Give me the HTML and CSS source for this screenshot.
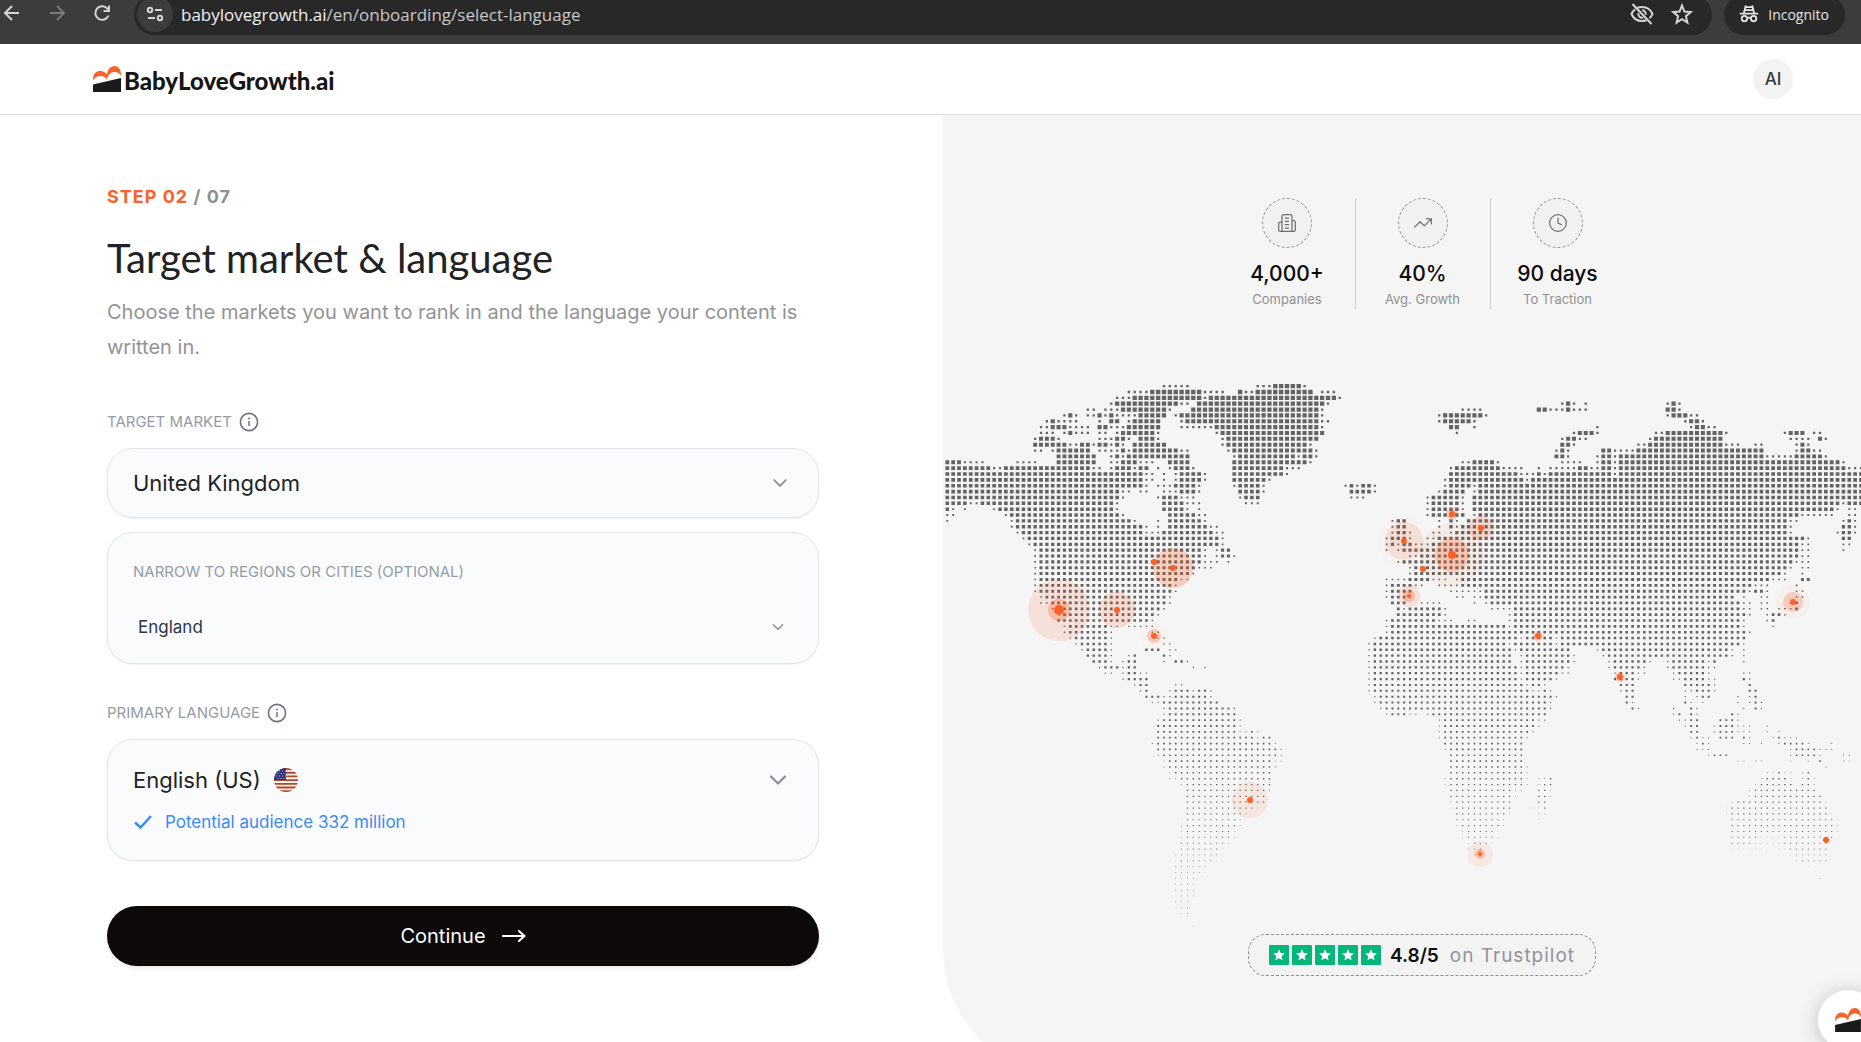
FILE: index.html
```html
<!DOCTYPE html>
<html lang="en">
<head>
<meta charset="utf-8">
<title>Select language – BabyLoveGrowth.ai</title>
<link rel="stylesheet" href="styles.css">
</head>
<body>
<svg class="defs" aria-hidden="true">
  <symbol id="chevron" viewBox="0 0 24 24"><path d="m5 8.500 7 7 7-7" fill="none" stroke="currentColor" stroke-width="2.200" stroke-linecap="round" stroke-linejoin="round"/></symbol>
  <symbol id="info" viewBox="0 0 20 20"><circle cx="10" cy="10" r="8.600" fill="none" stroke="currentColor" stroke-width="1.600"/><path d="M10 9v5" stroke="currentColor" stroke-width="1.500"/><circle cx="10" cy="6.500" r="1" fill="currentColor"/></symbol>
  <symbol id="mark" viewBox="0 0 28 26"><path d="M0 14.500C-.6 8.500 3 5 7 5c3 0 5.600 1.500 7 3.500C14.500 3.500 17.500 0 21.500 0S28.400 4 28 10c-1-2.500-3.500-4-6.500-4-3.500 0-6.500 2.500-7.500 7.500-1.500-2.500-4-3.700-7-3.500-3 .2-5.500 1.700-7 4.500Z" fill="#f9622a"/><path d="M0 18.500 28 12v14H0Z" fill="#1b1a1a"/></symbol>
  <symbol id="star" viewBox="0 0 20 20"><rect width="20" height="20" rx="1" fill="#05b67b"/><path d="m10 4.300 1.700 3.800 4.100.4-3.100 2.700.9 4.100L10 13.200l-3.600 2.100.9-4.100-3.100-2.700 4.100-.4Z" fill="#fff"/></symbol>
</svg>

<div class="browser">
  <nav class="browser-nav" aria-label="Browser">
    <button class="nav-button" type="button" aria-label="Back"><svg viewBox="0 0 18 18"><path d="M16 9H2M9 2 2 9l7 7"/></svg></button>
    <button class="nav-button nav-button-off" type="button" aria-label="Forward"><svg viewBox="0 0 18 18"><path d="M2 9h14M9 2l7 7-7 7"/></svg></button>
    <button class="nav-button" type="button" aria-label="Reload"><svg viewBox="0 0 18 18"><path d="M15.500 11.500A6.800 6.800 0 1 1 14.800 5.200L16 7M16 1.500V7h-5.500"/></svg></button>
  </nav>
  <div class="omnibox">
    <button class="site-info" type="button" aria-label="Site information"><svg viewBox="0 0 18 18"><circle cx="4" cy="5" r="2.200"/><path d="M9 5h7"/><circle cx="14" cy="13" r="2.200"/><path d="M2 13h7"/></svg></button>
    <div class="url"><span class="url-host">babylovegrowth.ai</span>/en/onboarding/select-language</div>
    <svg class="bar-icon" viewBox="0 0 24 24"><path d="M7.500 5.800A11 11 0 0 1 12 5c5 0 8.800 3 10.500 7a11 11 0 0 1-3 4.200M5.200 7.300A11 11 0 0 0 1.500 12C3.200 16 7 19 12 19c1.600 0 3-.3 4.300-.8M2.500 2l19 20M12 8.200a3.800 3.800 0 0 1 3.700 4.500M8.400 11a3.800 3.800 0 0 0 4.800 4.600"/></svg>
    <svg class="bar-icon" viewBox="0 0 24 24"><path d="m12 3.500 2.400 6 6.400.5-4.900 4.200 1.500 6.300-5.400-3.400-5.400 3.400 1.500-6.300L3.200 10l6.400-.5Z"/></svg>
  </div>
  <div class="incognito">
    <svg class="bar-icon" viewBox="0 0 24 24"><path d="M2 11.500h20M6.500 11l1.700-7.200 2 .7h3.600l2-.7 1.700 7.200M7 7.800h10"/><circle cx="7" cy="17" r="3"/><circle cx="17" cy="17" r="3"/><path d="M10 16.500q2-1 4 0"/></svg>
    <span>Incognito</span>
  </div>
</div>

<div class="page">
  <header class="header">
    <a class="logo" href="#"><svg viewBox="0 0 28 26"><use href="#mark"/></svg><span>BabyLoveGrowth.ai</span></a>
    <button class="avatar" type="button">AI</button>
  </header>

  <div class="columns">
    <main class="setup">
      <form class="form">
        <p class="step"><span class="step-now">STEP 02</span> / 07</p>
        <h1 class="title">Target market &amp; language</h1>
        <p class="lead">Choose the markets you want to rank in and the language your content is written in.</p>

        <div class="field-head"><label for="market">TARGET MARKET</label><svg class="info"><use href="#info"/></svg></div>
        <div class="card card-market">
          <select id="market" class="select select-large"><option>United Kingdom</option></select>
          <svg class="chevron chevron-medium"><use href="#chevron"/></svg>
        </div>
        <div class="card card-region">
          <label for="region">NARROW TO REGIONS OR CITIES (OPTIONAL)</label>
          <div class="row row-region">
            <select id="region" class="select"><option>England</option></select>
            <svg class="chevron chevron-small"><use href="#chevron"/></svg>
          </div>
        </div>

        <div class="field-head"><label for="language">PRIMARY LANGUAGE</label><svg class="info"><use href="#info"/></svg></div>
        <div class="card card-language">
          <div class="row">
            <select id="language" class="select select-large select-fit"><option>English (US)</option></select>
            <svg class="flag" viewBox="0 0 24 24">
              <clipPath id="round"><circle cx="12" cy="12" r="12"/></clipPath>
              <g clip-path="url(#round)"><path fill="#fbf3ee" d="M0 0h24v24H0z"/><path stroke="#b1482b" stroke-width="1.850" d="M0 1h24M0 4.700h24M0 8.400h24M0 12.100h24M0 15.800h24M0 19.500h24M0 23.200h24"/><path fill="#2f3480" d="M0 0h12v12H0z"/><path stroke="#b9bbdc" stroke-width="1" stroke-dasharray="1 2" d="M2 3h10M3.500 5.500H12M2 8h10M3.500 10.500H12"/></g>
            </svg>
            <svg class="chevron chevron-large"><use href="#chevron"/></svg>
          </div>
          <p class="audience"><svg viewBox="0 0 20 20"><path d="m2 10.500 5.500 5L18 4" fill="none" stroke="currentColor" stroke-width="2.400"/></svg>Potential audience 332 million</p>
        </div>

        <button class="continue" type="submit">Continue<svg viewBox="0 0 24 14"><path d="M1 7h21M17 2l5.500 5-5.500 5" fill="none" stroke="currentColor" stroke-width="2" stroke-linecap="round" stroke-linejoin="round"/></svg></button>
      </form>
    </main>

    <aside class="proof">
      <ul class="stats">
        <li class="stat">
          <span class="stat-icon"><svg viewBox="0 0 24 24"><path d="M6 22V4a2 2 0 0 1 2-2h8a2 2 0 0 1 2 2v18ZM6 11H4a2 2 0 0 0-2 2v7a2 2 0 0 0 2 2h2M18 9h2a2 2 0 0 1 2 2v9a2 2 0 0 1-2 2h-2M10 6h4M10 10h4M10 14h4M10 18h4"/></svg></span>
          <strong>4,000+</strong><span>Companies</span>
        </li>
        <li class="stat">
          <span class="stat-icon"><svg viewBox="0 0 24 24"><path d="m22 7-8.500 8.500-5-5L2 17M16 7h6v6"/></svg></span>
          <strong>40%</strong><span>Avg. Growth</span>
        </li>
        <li class="stat">
          <span class="stat-icon"><svg viewBox="0 0 24 24"><circle cx="12" cy="12" r="10"/><path d="M12 6v6l4 2"/></svg></span>
          <strong>90 days</strong><span>To Traction</span>
        </li>
      </ul>

      <svg class="map" viewBox="0 0 918 548" role="img" aria-label="World map of customers">
        <path id="land" fill="#636363"/>
        <g id="pins" fill="#fb6027"></g>
      </svg>

      <div class="rating">
        <span class="stars"><svg><use href="#star"/></svg><svg><use href="#star"/></svg><svg><use href="#star"/></svg><svg><use href="#star"/></svg><svg><use href="#star"/></svg></span>
        <strong>4.8/5</strong><span class="rating-source">on Trustpilot</span>
      </div>
    </aside>
  </div>
  <button class="chat" type="button" aria-label="Open chat"><svg viewBox="0 0 28 26"><use href="#mark"/></svg></button>
</div>
<script src="map.js"></script>
</body>
</html>
```
FILE: styles.css
```css
* { box-sizing: border-box; }
body {
  margin: 0;
  height: 100vh;
  display: flex;
  flex-direction: column;
  overflow: hidden;
  background: #fff;
  color: #212224;
  font-family: Inter, "Liberation Sans", sans-serif;
  font-size: 16px;
}
p, h1, ul { margin: 0; padding: 0; }
button, select { font: inherit; color: inherit; border: 0; background: none; padding: 0; }
.defs { display: none; }

/* Browser bar */
.browser {
  flex: none;
  height: 44px;
  padding: 0 16px 9px 0;
  display: flex;
  align-items: flex-end;
  background: #3c3c3c;
  color: #d4d4d4;
  font-family: "Open Sans", "Noto Sans", sans-serif;
}
.browser svg { fill: none; stroke: currentColor; stroke-width: 2; }
.browser-nav { display: flex; gap: 27px; width: 134px; padding: 0 0 13px 3px; }
.nav-button { width: 18px; height: 18px; }
.nav-button svg { display: block; }
.nav-button-off { color: #7b7b7b; }
.omnibox, .incognito {
  height: 40px;
  padding-bottom: 2px;
  display: flex;
  align-items: center;
  background: #282828;
  border-radius: 20px;
}
.omnibox { flex: 1; gap: 16px; padding-left: 3px; padding-right: 18px; }
.site-info { width: 36px; height: 36px; border-radius: 50%; background: #3c3c3c; display: grid; place-items: center; }
.site-info svg { width: 18px; height: 18px; }
.url { flex: 1; margin-left: -8px; font-size: 17px; color: #c7c7c7; }
.url-host { color: #f0f0f0; }
.bar-icon { width: 24px; height: 24px; }
.incognito { margin-left: 12px; padding-left: 14px; padding-right: 16px; gap: 8px; font-size: 14px; color: #e4e4e4; }
.incognito .bar-icon { width: 22px; height: 22px; }

/* Page */
.page { flex: 1; min-height: 0; display: flex; flex-direction: column; position: relative; overflow: hidden; }
.header {
  flex: none;
  height: 71px;
  padding: 0 68px 0 93px;
  display: flex;
  align-items: center;
  justify-content: space-between;
  border-bottom: 1px solid #dcdcdc;
}
.logo { display: flex; align-items: center; gap: 3px; padding-top: 3px; color: #171616; text-decoration: none; font-family: Lato, sans-serif; font-weight: 900; font-size: 24px; }
.logo svg { width: 28px; height: 26px; margin-bottom: 4px; }
.avatar { width: 40px; height: 40px; border-radius: 50%; background: #f3f3f4; color: #333941; font-weight: 500; font-size: 17px; }
.columns { flex: 1; display: grid; grid-template-columns: 943fr 918fr; }
.setup { padding: 68px 124px 0 107px; }
.form { display: flex; flex-direction: column; }

.step { font-weight: 700; font-size: 18px; line-height: 28px; letter-spacing: 1px; color: #8e9092; }
.step-now { color: #f9622a; }
.title { margin-top: 22px; font-family: Lato, sans-serif; font-weight: 400; font-size: 40px; line-height: 50px; }
.lead { margin-top: 12px; font-size: 20px; line-height: 35px; color: #929497; }
.field-head { display: flex; align-items: center; gap: 7px; height: 20px; margin-top: 47px; margin-bottom: 16px; color: #6b7280; }
.card + .field-head { margin-top: 39px; }
label { font-size: 15px; line-height: 20px; color: #949ba6; }
.info { width: 20px; height: 20px; }
.card {
  border: 1px solid #e2e4e7;
  border-radius: 26px;
  background: #fafbfd;
  box-shadow: 0 1px 2px #0000000d;
}
.card-market { height: 70px; padding: 0 28px 0 25px; display: flex; align-items: center; }
.card-region { height: 132px; margin-top: 14px; padding: 28px 32px 0 25px; }
.card-language { height: 122px; padding: 23px 28px 0 25px; }
.row { display: flex; align-items: center; height: 34px; }
.row-region { margin-top: 28px; padding-left: 5px; color: #2c3440; }
.select { appearance: none; flex: 1; font-size: 17px; outline: none; }
.select-large { font-size: 22px; }
.select-fit { flex: none; field-sizing: content; }
.chevron { color: #8c8e91; margin-left: auto; }
.chevron-small { width: 16px; height: 16px; }
.chevron-medium { width: 20px; height: 20px; }
.chevron-large { width: 24px; height: 24px; }
.flag { width: 24px; height: 24px; margin-left: 13px; }
.audience { display: flex; align-items: center; gap: 12px; margin-top: 13px; font-size: 17px; line-height: 24px; color: #3b8af5; }
.audience svg { width: 20px; height: 20px; }
.continue {
  height: 60px;
  margin-top: 45px;
  border-radius: 30px;
  background: #0d0909;
  color: #fff;
  font-size: 20px;
  display: flex;
  align-items: center;
  justify-content: center;
  gap: 16px;
  box-shadow: 0 2px 4px #0000001a;
}
.continue svg { width: 24px; height: 14px; }

/* Right panel */
.proof {
  min-height: calc(100% + 35px);
  border-bottom-left-radius: 128px;
  background: #f5f5f5;
  display: flex;
  flex-direction: column;
  align-items: center;
}
.stats { list-style: none; display: flex; margin: 83px 0 0 40px; }
.stat {
  width: 135px;
  height: 111px;
  display: flex;
  flex-direction: column;
  align-items: center;
  font-size: 13px;
  line-height: 18px;
  color: #8f9193;
}
.stat + .stat { border-left: 1px solid #cfcfcf; }
.stat strong { margin-top: 11px; margin-bottom: 1px; font-weight: 500; font-size: 21px; line-height: 30px; color: #0b0b0b; }
.stat-icon { width: 50px; height: 50px; border: 1px dashed #8d8d8d; border-radius: 50%; background: #f1f1f1; display: grid; place-items: center; }
.stat-icon svg { width: 20px; height: 20px; fill: none; stroke: #6f6f6f; stroke-width: 1.5px; stroke-linecap: round; stroke-linejoin: round; }
.map { width: 100%; margin-top: 73px; }
.rating {
  height: 42px;
  margin: 4px 0 0 40px;
  padding: 0 20px;
  display: flex;
  align-items: center;
  border: 1px dashed #8d8d8d;
  border-radius: 18px;
  background: #f3f3f3;
  font-size: 19px;
  color: #929497;
}
.stars { display: flex; gap: 3px; }
.stars svg { width: 20px; height: 20px; }
.rating strong { margin: 0 11px 0 9px; font-weight: 600; color: #0e0e0e; }
.rating-source { letter-spacing: 1px; }
.chat {
  position: absolute;
  right: -17px;
  bottom: -8px;
  width: 60px;
  height: 60px;
  border-radius: 50%;
  background: #fff;
  box-shadow: 0 2px 20px #00000038;
  display: grid;
  place-items: center;
}
.chat svg { width: 26px; height: 24px; }
```
FILE: map.js
```
// Dot grid of the land. One line per grid row, north to south.
// "12-20" is a run of columns, "12" one column, a leading "s" marks small coastal dots.
const rows = `
s37-41 s53-55 56-60 s61
s31-34 35-43 s44-47 50 s51-52 53-62 s64-66
s29-31 32-43 s44 45-66 s67
s28 29-39 s40-41 43-64 s65 s105 106 s107 s109 s123 124 s125
s24-25 s27-29 30-37 s38 42-63 s64 s88-91 101-102 s103-105 106 s107-109 123-124 s125
s20 21 s22 s24-25 26 s27 28 s29-32 33-37 s39 40-63 s64 s84 85-91 s92 s123 124-126 s127-128
s17 18 s19-22 s26 28-29 s31 32-36 s40 41-63 s64-65 s84 85-89 s90 s126 127-128 s129
s16-17 18-20 s21-24 26-27 s28-30 31-36 s40-45 46-63 s64 86-87 s90 s111 s127 128-129 s130-131
s16-18 s20 21 s22-24 s26-27 s29 30-35 s36 s46 47-64 s87 s107 108-110 s111 s121-122 123-132 s133 s143 144-146 s148-149
s15 16-18 s19 s26-28 29-30 s31 33-35 s36 s47 48-63 s105 106-107 s108-109 s120 121-132 s144-147 149 s150
15-18 19-20 s21-22 23-24 s25 26-27 s28 29 s30 32-37 s47 48-61 s62 105-106 s107 s118-119 120-132 s133-135 s138-139 s145 146 s147
s15-16 s18 19-24 s26-29 30 s31 32-39 s40-41 s48 49-62 s63 s104 105 s106 112-113 s114-117 118-139 s145 146-147 s148-149
19-25 s28 29 s30 31-41 s49 50-59 s60 61-62 s63 104-105 s106 s111 112-113 s114 115-139 s140-144 145-149 s150
0-2 s3-6 s12-15 19-25 s28-29 30-32 s33-35 38-41 49-61 s62 s88-89 90-93 s94 s105-108 s111 112-113 s114 115-139 140-152 s153
0-7 s8-9 10-24 s25-26 s28 29-31 s32 33-34 s36 s38 39-41 s42 49-57 s58-60 s86 87-94 s95-98 s101 s103-107 108-109 s110 s111 112-113 s114 115-153 s154-156
0-31 32-33 s34-35 s37 s39 40-43 s44 49-57 s58 86-97 s98-100 101 s102 103-113 s114 115-156
0-33 s34-35 s37 s39 40-43 s44 49-54 s55 s85 86-98 s99 100-156
0-33 s34 s36-38 39-42 s43 s49 50-53 s54 s68 69 s70 71-72 s73 s85 86-89 s90 91-156
0-29 s30-31 s33-34 s37-39 40-42 s43 50-53 s54 69-72 s73 s84 85-88 s90 91-156
0-29 s30 s36 37-39 s40-42 s50 51-53 s69-71 s82 83-87 s88 90-156
0-3 s4-5 6-28 s29 37-40 s41-43 s51-53 s82 83-87 s88 90-152 s153 154-156
0 s1 s3 s8 9-28 s29 37-40 s41 s43 s82 83-87 s88 90-151 s152 s154-155
s0-1 s10 11-29 s30 38-42 s43-44 s82 83-88 s90 91-145 s146-151 s154-155
s0 s11 12-31 s32 s36 38-43 s44 s76 77-78 s84 86 s87 89-143 s144-145 s153 154 s155
s11 12-33 s34 s36 38-44 s45-46 s76 77-78 s84 86 s87 88-143 s144 153-154 s155
s12 13-33 s34-36 37-45 s46-47 s76 77-78 s79 s83-84 s86 87-143 s144 s152 153-154 s155
s13 14-46 s47 s75 76-78 s79 s82-83 84-144 145-146 s147 153-154
s14 15-46 s47 s75 76 s77 78-79 s80 s81-82 83-145 s146-147 s153-154
s15 16-43 s44 s46 47-48 s75 s77 78-80 81-144 145 s146-147 s153
s15 16-43 s44 s46 47-48 s49 s79-80 81-145 s146-147
s15 16-43 s44-46 s48 s77 78 79-144 s145-147
s15 16-42 s43-45 s79 80-143 s144 s146-147
s15 16-41 s42 s79 80-142 s143 s146
s15 16-39 s40-41 s75-76 s77-78 79-82 s83-85 s87 88-140 s141-143 146-147
s15 16-38 s39 s75 76-79 s80-81 s84-87 88-137 s138-140 s145
s15 16-38 s39 s75 76-79 s86-91 92-136 s137 138-139 s140 s145-146
s16 17-37 s38 s75 76-78 s79 s87-88 s90-91 92-134 s136 s139-140 s145-146
s16-17 18-37 s38 76-78 s81-84 s90 s92 93-135 s136-137 s139-140 s144 145
s18 19-36 s37 77 s78 79-84 s85 s93-96 97-135 s136-137 s139-140 s142-144 145
s19 20-35 s36 77-84 s85 s96 97-136 s137 s140 141-142 s143
19-34 s35 s75 76-83 s84-86 s89-90 s96 97-135 s136 s140 141
s20 21-27 s28-29 s31-35 s75 76-95 s96 97-135 s136 s141
s20 21-27 s28 s35-36 s75 76-136 s137
s21 22-27 s28 s36-37 s73 74-97 s98 99-103 s104 105-136
s22 23-27 s28 s37-38 s72 73-95 s96 97-103 s104 105-135 s136
s23 24-27 s28 34-36 s38-39 s72 73-96 s97 98-106 s111 112-133 s134 s136
24-27 s28 s31 32 37 s38 s72 73-96 s98 99-106 s107 s112 113-133 s134 s136
25-27 s28 s30 31-32 s37 39-40 s41 s72 73-96 s98 99-106 s107 s113 114-119 s120 s123 124-129 s130 131 s136
s26 27-29 s30 31-32 s42 s44 s72 73-97 s98 99-105 s106 s113 114-118 s119 s123 124-129 s130-131
s27-28 s30 31-32 s33-34 s72 73-97 s98 99-104 s105-106 s114 115-117 s118-119 s124 125-129 s130 s136-137
s30 31 32-34 s72 73-97 s98 99-103 s104 114-117 s118 s124-125 126-129 s130-131 136 s137
s32 33-34 s39-40 s72 73-98 s99 100-101 s102 115-117 126-130 s131 137
s33 34 s38 39-41 s42 43-44 s45 s72 73-99 s100-101 102 s103 s115 116-117 s126-127 128-130 s131 137-138
34-36 s37-38 39-44 s45 s73 74-102 103 s104 116-117 s126 s128 129-130 s135 s137 138
s35-36 37-45 46 s73 74-102 s103 116 s117 126 s127 s129 s135 s137 138 s139
s37 38-48 s49 s74 75-102 s103 117 s118 s124 127 s128 s136 138 s139
s37 38-48 49 s75 76-78 s79-80 s82 83-101 102 s124 125 127 s128 134 s135
s36 37-49 s50 s84 85-100 s101-102 s125-126 127-128 132-134 s135
36-49 s50 s84 85-100 s101 s126 127-128 s131 132-134 s135-137 s140
36-49 s50-51 52 s53 s84 85-99 s100 127-128 s131 132-134 s135-137 s140 s142
36-52 s53 54-55 s84 85-98 s99 s127 128 s129-130 132-134 136 s137 s141 142 s143-145
s35 36-55 s56 85-98 s128 129 s130 s136-137 s139 s142 143-146 s147 s151
36-56 s57 s85 86-98 s128-130 s144 145-148 s149-151
s36 37-56 s57 86-98 s130 131-132 133 s144 145-148 s149 s153-154
s37 38-55 s56-57 86-98 s135-136 s138-139 s144 s147 149 s153-154
s37 38-55 s56 86-98 s99 s150
s38 39-55 86-98 s99 s140-141 142 s143-144 s146 147
s38-39 40-55 s85 86-98 s99 s101-102 103 s139 140-143 s144 s146 147 s148
s40 41-55 s85 86-97 98 s99 s101 102-103 s138 139-144 146-147 s148
41-54 s55 86-96 s97-98 101-102 s103 s137 138-148
41-54 86-96 s97 101-102 s103 s137 138-149
41-54 s86 87-96 101-102 s134 135-149 s150
41-52 s53 s86 87-96 s100-101 102 s133 134-150
41-50 s51 87-95 s96 s101-102 s133 134-150 s151
s40 41-49 s50 87-94 s95 s101 134-151 s152
s40 41-49 s50 s87 88-94 s95 134-151 s152
s40 41-48 s49 s88 89-93 s94 134-151 s152
s40 41-48 s49 s88 89-93 s94 134-138 s139-142 143-151
40-47 s48 s89 90-92 s93 134-137 s138-142 143-150
40-46 s47 s89 90-91 s134-139 s142-143 144-150
s39 40-46 s47 90-91 s144 145-150
s39 40-45 s46 s145 146-150
39-44 s45 s147
39-43 s44
39-42 s43 s148 149
39-42
39-42
s39 40-42
39-41
s39 40-41
s40 41
s41
s42`.trim().split("\n");

const pitch = 5.857;
let d = "";
rows.forEach((line, r) => {
  const full = Math.max(0.75, 4.4 - r * 0.044);
  for (const token of line.split(" ")) {
    const small = token[0] === "s";
    const [from, to = from] = token.replace("s", "").split("-").map(Number);
    const size = small ? full * 0.55 : full;
    for (let c = from; c <= to; c++) {
      const x = 4.3 + c * pitch - size / 2;
      const y = 4.1 + r * 5.86 - size / 2;
      d += `M${x.toFixed(2)} ${y.toFixed(2)}h${size.toFixed(2)}v${size.toFixed(2)}h-${size.toFixed(2)}z`;
    }
  }
});
document.getElementById("land").setAttribute("d", d);

// Pins: x, y, then radius and opacity of each disc from the outside in.
const pins = [
  [211, 180, 3, 1],
  [230, 186, 20, 0.25, 3, 1],
  [116, 228, 31, 0.13, 11, 0.3, 5, 1],
  [174, 228, 18, 0.17, 3, 1],
  [211, 254, 14, 0.02, 7, 0.28, 3, 1],
  [461, 159, 26, 0.02, 19, 0.13, 3, 1],
  [509, 132, 6, 0.28, 3, 1],
  [538, 146, 12, 0.2, 3, 1],
  [509, 173, 32, 0.06, 17, 0.28, 4, 1],
  [480, 187, 3, 1],
  [466, 214, 11, 0.13, 6, 0.3, 2, 1],
  [595, 254, 5, 0.28, 3, 1],
  [850, 220, 17, 0.04, 10, 0.25, 3, 1],
  [307, 418, 18, 0.1, 3, 1],
  [677, 295, 5, 0.3, 3, 1],
  [537, 472, 13, 0.08, 5, 0.35, 2, 1],
  [883, 458, 3, 1],
];
document.getElementById("pins").innerHTML = pins.map(([x, y, ...discs]) => {
  let out = "";
  for (let i = 0; i < discs.length; i += 2) out += `<circle cx="${x}" cy="${y}" r="${discs[i]}" opacity="${discs[i + 1]}"/>`;
  return out;
}).join("");
```
